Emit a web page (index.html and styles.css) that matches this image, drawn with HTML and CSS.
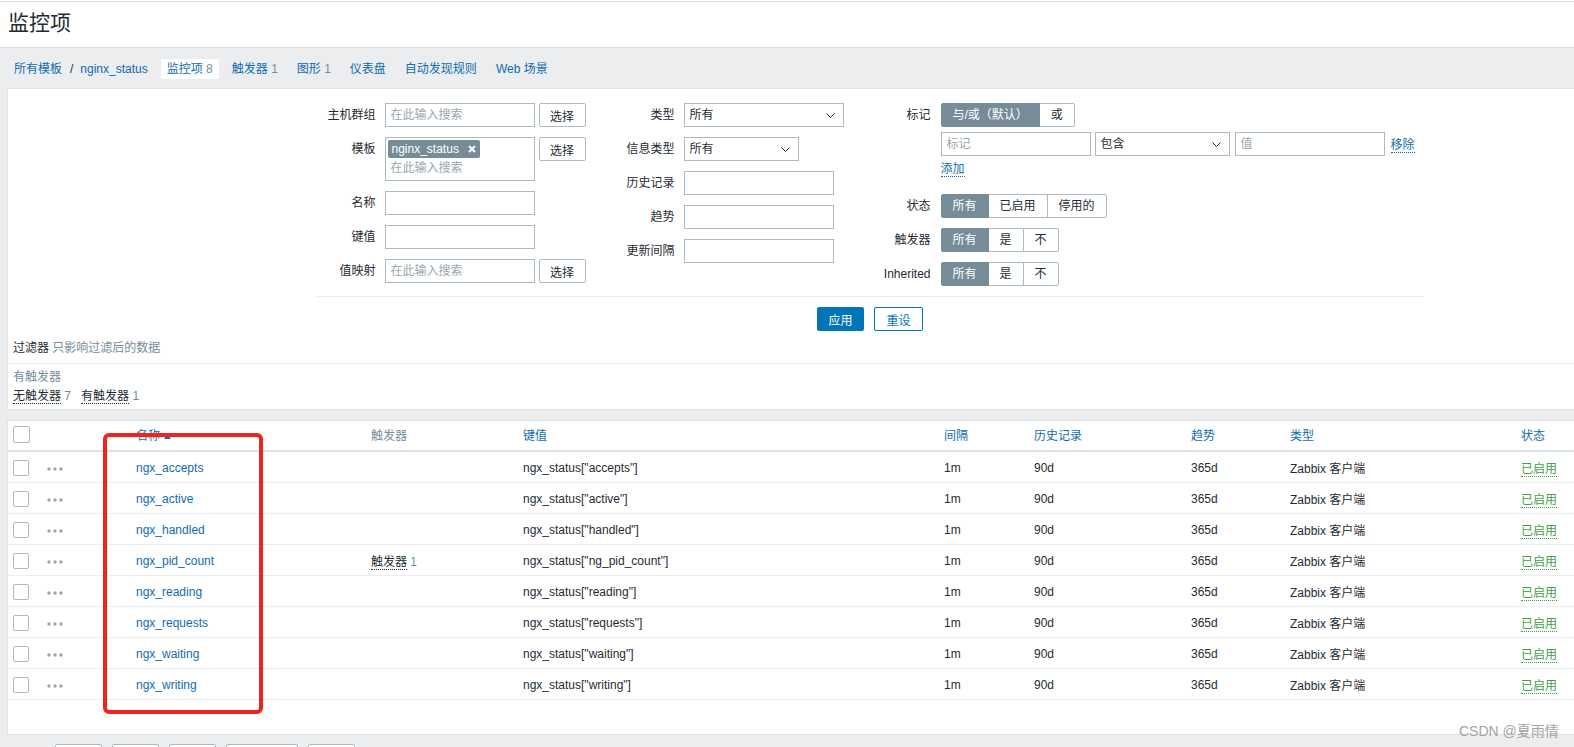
FILE: index.html
```html
<!DOCTYPE html>
<html lang="zh-CN">
<head>
<meta charset="utf-8">
<title>监控项</title>
<link rel="stylesheet" href="styles.css">
</head>
<body>
<div class="page">
  <header class="header"><h1 class="title">监控项</h1></header>
  <main class="content">
    <nav class="nav">
      <div class="crumbs"><a class="lnk">所有模板</a><span class="sep">/</span><a class="lnk">nginx_status</a></div>
      <a class="tab active">监控项 <span class="cnt">8</span></a>
      <a class="tab">触发器 <span class="cnt">1</span></a>
      <a class="tab">图形 <span class="cnt">1</span></a>
      <a class="tab">仪表盘</a>
      <a class="tab">自动发现规则</a>
      <a class="tab">Web 场景</a>
    </nav>

    <section class="panel filter">
      <div class="filter-form">
        <div class="cols">
          <div class="col col1">
            <div class="lbl">主机群组</div>
            <div class="field"><input class="inp" placeholder="在此输入搜索"><button class="btn-sel">选择</button></div>
            <div class="lbl">模板</div>
            <div class="field">
              <div class="ms">
                <span class="ms-tag">nginx_status<svg class="ms-x" width="8" height="8" viewBox="0 0 8 8"><path d="M1 1L7 7M7 1L1 7" stroke="#fff" stroke-width="2"/></svg></span>
                <span class="ms-ph">在此输入搜索</span>
              </div>
              <button class="btn-sel">选择</button>
            </div>
            <div class="lbl">名称</div>
            <div class="field"><input class="inp"></div>
            <div class="lbl">键值</div>
            <div class="field"><input class="inp"></div>
            <div class="lbl">值映射</div>
            <div class="field"><input class="inp" placeholder="在此输入搜索"><button class="btn-sel">选择</button></div>
          </div>

          <div class="col col2">
            <div class="lbl">类型</div>
            <div class="field"><div class="sel w160">所有<svg class="chev" width="9" height="5" viewBox="0 0 9 5"><path d="M0.5 0.5L4.5 4.5L8.5 0.5" fill="none" stroke="#1f2c33"/></svg></div></div>
            <div class="lbl">信息类型</div>
            <div class="field"><div class="sel w115">所有<svg class="chev" width="9" height="5" viewBox="0 0 9 5"><path d="M0.5 0.5L4.5 4.5L8.5 0.5" fill="none" stroke="#1f2c33"/></svg></div></div>
            <div class="lbl">历史记录</div>
            <div class="field"><input class="inp"></div>
            <div class="lbl">趋势</div>
            <div class="field"><input class="inp"></div>
            <div class="lbl">更新间隔</div>
            <div class="field"><input class="inp"></div>
          </div>

          <div class="col col3">
            <div class="lbl">标记</div>
            <div class="tags">
              <div class="seg"><span class="on">与/或（默认）</span><span>或</span></div>
              <div class="tag-row">
                <input class="inp" placeholder="标记">
                <div class="sel w135">包含<svg class="chev" width="9" height="5" viewBox="0 0 9 5"><path d="M0.5 0.5L4.5 4.5L8.5 0.5" fill="none" stroke="#1f2c33"/></svg></div>
                <input class="inp v" placeholder="值">
                <a class="lnk dot">移除</a>
              </div>
              <div class="add-row"><a class="lnk dot">添加</a></div>
            </div>
            <div class="lbl">状态</div>
            <div class="seg"><span class="on">所有</span><span>已启用</span><span>停用的</span></div>
            <div class="lbl">触发器</div>
            <div class="seg"><span class="on">所有</span><span>是</span><span>不</span></div>
            <div class="lbl">Inherited</div>
            <div class="seg"><span class="on">所有</span><span>是</span><span>不</span></div>
          </div>
        </div>
        <div class="filter-actions">
          <button class="btn-apply">应用</button>
          <button class="btn-reset">重设</button>
        </div>
      </div>
      <div class="sub-head">过滤器 <span class="muted">只影响过滤后的数据</span></div>
      <div class="sub-body">
        <div class="sub-title">有触发器</div>
        <div class="sub-items"><span class="dark-dot">无触发器</span> <span class="muted">7</span><span class="dark-dot gapl">有触发器</span> <span class="muted">1</span></div>
      </div>
    </section>

    <section class="panel list-panel">
      <table class="list">
        <colgroup>
          <col class="c-cb"><col class="c-dots"><col class="c-name"><col class="c-trig"><col class="c-key">
          <col class="c-int"><col class="c-hist"><col class="c-trend"><col class="c-type"><col class="c-status">
        </colgroup>
        <thead>
          <tr>
            <th><span class="cb"></span></th>
            <th></th>
            <th><a class="lnk">名称</a><svg class="sort" width="7" height="5" viewBox="0 0 7 5"><path d="M0 5L3.5 0L7 5Z" fill="#0f6cb0"/></svg></th>
            <th>触发器</th>
            <th><a class="lnk">键值</a></th>
            <th><a class="lnk">间隔</a></th>
            <th><a class="lnk">历史记录</a></th>
            <th><a class="lnk">趋势</a></th>
            <th><a class="lnk">类型</a></th>
            <th><a class="lnk">状态</a></th>
          </tr>
        </thead>
        <tbody>
          <tr><td><span class="cb"></span></td><td><svg class="dots" width="16" height="4" viewBox="0 0 16 4"><circle cx="2" cy="2" r="1.7"/><circle cx="8" cy="2" r="1.7"/><circle cx="14" cy="2" r="1.7"/></svg></td><td><a class="lnk">ngx_accepts</a></td><td></td><td>ngx_status["accepts"]</td><td>1m</td><td>90d</td><td>365d</td><td>Zabbix 客户端</td><td><a class="ok">已启用</a></td></tr>
          <tr><td><span class="cb"></span></td><td><svg class="dots" width="16" height="4" viewBox="0 0 16 4"><circle cx="2" cy="2" r="1.7"/><circle cx="8" cy="2" r="1.7"/><circle cx="14" cy="2" r="1.7"/></svg></td><td><a class="lnk">ngx_active</a></td><td></td><td>ngx_status["active"]</td><td>1m</td><td>90d</td><td>365d</td><td>Zabbix 客户端</td><td><a class="ok">已启用</a></td></tr>
          <tr><td><span class="cb"></span></td><td><svg class="dots" width="16" height="4" viewBox="0 0 16 4"><circle cx="2" cy="2" r="1.7"/><circle cx="8" cy="2" r="1.7"/><circle cx="14" cy="2" r="1.7"/></svg></td><td><a class="lnk">ngx_handled</a></td><td></td><td>ngx_status["handled"]</td><td>1m</td><td>90d</td><td>365d</td><td>Zabbix 客户端</td><td><a class="ok">已启用</a></td></tr>
          <tr><td><span class="cb"></span></td><td><svg class="dots" width="16" height="4" viewBox="0 0 16 4"><circle cx="2" cy="2" r="1.7"/><circle cx="8" cy="2" r="1.7"/><circle cx="14" cy="2" r="1.7"/></svg></td><td><a class="lnk">ngx_pid_count</a></td><td><span class="dark-dot">触发器</span> <span class="muted">1</span></td><td>ngx_status["ng_pid_count"]</td><td>1m</td><td>90d</td><td>365d</td><td>Zabbix 客户端</td><td><a class="ok">已启用</a></td></tr>
          <tr><td><span class="cb"></span></td><td><svg class="dots" width="16" height="4" viewBox="0 0 16 4"><circle cx="2" cy="2" r="1.7"/><circle cx="8" cy="2" r="1.7"/><circle cx="14" cy="2" r="1.7"/></svg></td><td><a class="lnk">ngx_reading</a></td><td></td><td>ngx_status["reading"]</td><td>1m</td><td>90d</td><td>365d</td><td>Zabbix 客户端</td><td><a class="ok">已启用</a></td></tr>
          <tr><td><span class="cb"></span></td><td><svg class="dots" width="16" height="4" viewBox="0 0 16 4"><circle cx="2" cy="2" r="1.7"/><circle cx="8" cy="2" r="1.7"/><circle cx="14" cy="2" r="1.7"/></svg></td><td><a class="lnk">ngx_requests</a></td><td></td><td>ngx_status["requests"]</td><td>1m</td><td>90d</td><td>365d</td><td>Zabbix 客户端</td><td><a class="ok">已启用</a></td></tr>
          <tr><td><span class="cb"></span></td><td><svg class="dots" width="16" height="4" viewBox="0 0 16 4"><circle cx="2" cy="2" r="1.7"/><circle cx="8" cy="2" r="1.7"/><circle cx="14" cy="2" r="1.7"/></svg></td><td><a class="lnk">ngx_waiting</a></td><td></td><td>ngx_status["waiting"]</td><td>1m</td><td>90d</td><td>365d</td><td>Zabbix 客户端</td><td><a class="ok">已启用</a></td></tr>
          <tr><td><span class="cb"></span></td><td><svg class="dots" width="16" height="4" viewBox="0 0 16 4"><circle cx="2" cy="2" r="1.7"/><circle cx="8" cy="2" r="1.7"/><circle cx="14" cy="2" r="1.7"/></svg></td><td><a class="lnk">ngx_writing</a></td><td></td><td>ngx_status["writing"]</td><td>1m</td><td>90d</td><td>365d</td><td>Zabbix 客户端</td><td><a class="ok">已启用</a></td></tr>
        </tbody>
      </table>
    </section>

    <div class="mass">
      <span class="sel-count"></span>
      <button class="btn-mass" aria-label="启用"></button>
      <button class="btn-mass" aria-label="禁用"></button>
      <button class="btn-mass" aria-label="复制"></button>
      <button class="btn-mass wide" aria-label="清除历史"></button>
      <button class="btn-mass" aria-label="删除"></button>
    </div>
  </main>

  <div class="annot"></div>
  <div class="watermark">CSDN @夏雨情</div>
</div>
</body>
</html>
```

FILE: styles.css
```css
* { box-sizing: border-box; }
html, body { margin: 0; padding: 0; overflow: hidden; background: #fff; }
body {
  font-family: "Liberation Sans", Arial, "Noto Sans CJK SC", sans-serif;
  font-size: 12px;
  color: #1f2c33;
}
.page { position: relative; width: 1740px; padding-top: 1px; }

.header { border-top: 1px solid #dedede; height: 46px; padding: 9px 0 0 8px; background: #fff; }
.title { margin: 0; font-size: 21px; font-weight: normal; line-height: 24px; color: #1f2c33; }

.content { background: #ebedef; border-top: 1px solid #dcdfe2; padding-bottom: 40px; }

.lnk { color: #0f6cb0; text-decoration: none; cursor: pointer; }
.muted { color: #768d99; }

.nav { height: 40px; display: flex; align-items: center; gap: 7px; padding: 1px 0 0 8px; }
.crumbs { display: flex; align-items: center; padding: 0 6px; line-height: 20px; }
.sep { color: #1f2c33; margin: 0 7px 0 8px; }
.tab { color: #0f6cb0; text-decoration: none; padding: 0 6px; height: 20px; line-height: 20px; }
.tab.active { background: #fff; }
.cnt { color: #768d99; }

.panel { background: #fff; border: 1px solid #dfe4e7; margin: 0 7px; }

.filter-form { width: 1107px; margin: 0 auto; padding-top: 14px; }
.cols { display: flex; align-items: flex-start; }
.col { display: grid; row-gap: 10px; align-items: start; }
.col1 { grid-template-columns: 59px 201px; column-gap: 9px; }
.col2 { grid-template-columns: 59px 160px; column-gap: 9px; margin-left: 30px; }
.col3 { grid-template-columns: 57px auto; column-gap: 10px; margin-left: 30px; }
.lbl { text-align: right; line-height: 24px; white-space: nowrap; }

.field { display: flex; gap: 4px; align-items: flex-start; }
.inp {
  width: 150px; height: 24px; border: 1px solid #acbbc2; background: #fff;
  padding: 0 5px; font: inherit; color: #1f2c33; outline: none; border-radius: 0;
}
.inp::placeholder { color: #9aa6ad; }
.btn-sel {
  width: 47px; height: 24px; border: 1px solid #acbbc2; background: #fff; border-radius: 2px;
  font: inherit; color: #1f2c33; padding: 0;
}

.ms { width: 150px; height: 44px; border: 1px solid #acbbc2; padding: 2px; display: flex; flex-direction: column; align-items: flex-start; }
.ms-tag {
  display: inline-flex; align-items: center; height: 18px; background: #768d99; color: #fff;
  padding: 0 4px; border-radius: 2px; gap: 9px; line-height: 18px;
}
.ms-x { display: block; }
.ms-ph { color: #9aa6ad; line-height: 17px; margin: 2px 0 0 3px; }

.sel {
  position: relative; height: 24px; border: 1px solid #acbbc2; background: #fff;
  padding: 0 5px; line-height: 22px;
}
.w160 { width: 160px; }
.w115 { width: 115px; }
.w135 { width: 135px; }
.chev { position: absolute; right: 8px; top: 9px; }

.tags { display: flex; flex-direction: column; align-items: flex-start; }
.tag-row { display: flex; align-items: center; margin-top: 5px; }
.tag-row .sel { margin-left: 4px; }
.tag-row .v { margin-left: 5px; }
.tag-row .dot { margin-left: 6px; }
.add-row { margin-top: 5px; height: 23px; line-height: 17px; }
.dot { border-bottom: 1px dotted currentColor; }

.seg { display: inline-flex; justify-self: start; }
.seg span {
  height: 24px; line-height: 22px; padding: 0 11px; border: 1px solid #acbbc2; background: #fff;
  margin-left: -1px; white-space: nowrap;
}
.seg span:first-child { margin-left: 0; border-radius: 2px 0 0 2px; }
.seg span:last-child { border-radius: 0 2px 2px 0; }
.seg .on { background: #768d99; border-color: #768d99; color: #fff; position: relative; }

.filter-actions { margin-top: 10px; border-top: 1px solid #ebeef0; padding-top: 10px; text-align: center; font-size: 0; }
.filter-actions button { font-family: inherit; font-size: 12px; height: 24px; padding: 0; border-radius: 2px; vertical-align: top; }
.btn-apply { width: 47px; background: #0275b8; border: 1px solid #0275b8; color: #fff; }
.btn-reset { width: 49px; margin-left: 10px; background: #fff; border: 1px solid #0275b8; color: #0275b8; }

.sub-head { margin-top: 9px; line-height: 16px; padding: 0 5px 7px; }
.sub-body { border-top: 1px solid #ebeef0; padding: 4px 5px 3px; }
.sub-title { line-height: 19px; color: #768d99; }
.sub-items { line-height: 19px; }
.dark-dot { border-bottom: 1px dotted #1f2c33; }
.gapl { margin-left: 10px; }

.list-panel { margin-top: 10px; padding-bottom: 34px; }
.list { width: 100%; border-collapse: separate; border-spacing: 0; table-layout: fixed; }
.c-cb { width: 33px; }
.c-dots { width: 89px; }
.c-name { width: 235px; }
.c-trig { width: 152px; }
.c-key { width: 421px; }
.c-int { width: 90px; }
.c-hist { width: 157px; }
.c-trend { width: 99px; }
.c-type { width: 231px; }
.list th, .list td {
  box-sizing: border-box; height: 31px; padding: 0 6px; text-align: left; font-weight: normal;
  white-space: nowrap; vertical-align: middle; overflow: hidden;
}
.list th { border-bottom: 2px solid #dde3e6; color: #768d99; padding-bottom: 3px; }
.list td { border-bottom: 1px solid #ebeef0; padding-top: 1px; }
.list th:first-child, .list td:first-child { padding-left: 5px; }
.cb { display: block; width: 17px; height: 17px; border: 1px solid #acbbc2; border-radius: 2px; background: #fff; }
.list td .cb { width: 16px; height: 16px; }
.sort { margin-left: 4px; vertical-align: 1px; }
.dots { display: block; fill: #9aa6ad; margin-top: 2px; }
.ok { color: #429e47; border-bottom: 1px dotted #429e47; }

.mass { display: flex; align-items: flex-start; padding: 9px 0 0 13px; gap: 10px; }
.sel-count { height: 24px; width: 32px; }
.btn-mass {
  width: 47px; height: 24px; border: 1px solid #acbbc2; background: #fff; border-radius: 2px;
  font: inherit; color: #1f2c33; padding: 0;
}
.btn-mass.wide { width: 72px; }

.annot {
  position: absolute; left: 103px; top: 433px; width: 160px; height: 281px;
  border: 4px solid #f2231c; border-radius: 6px;
}
.watermark {
  position: absolute; left: 1459px; top: 722px; font-size: 14px; line-height: 18px;
  color: #a3a3a3; white-space: nowrap;
}
```
